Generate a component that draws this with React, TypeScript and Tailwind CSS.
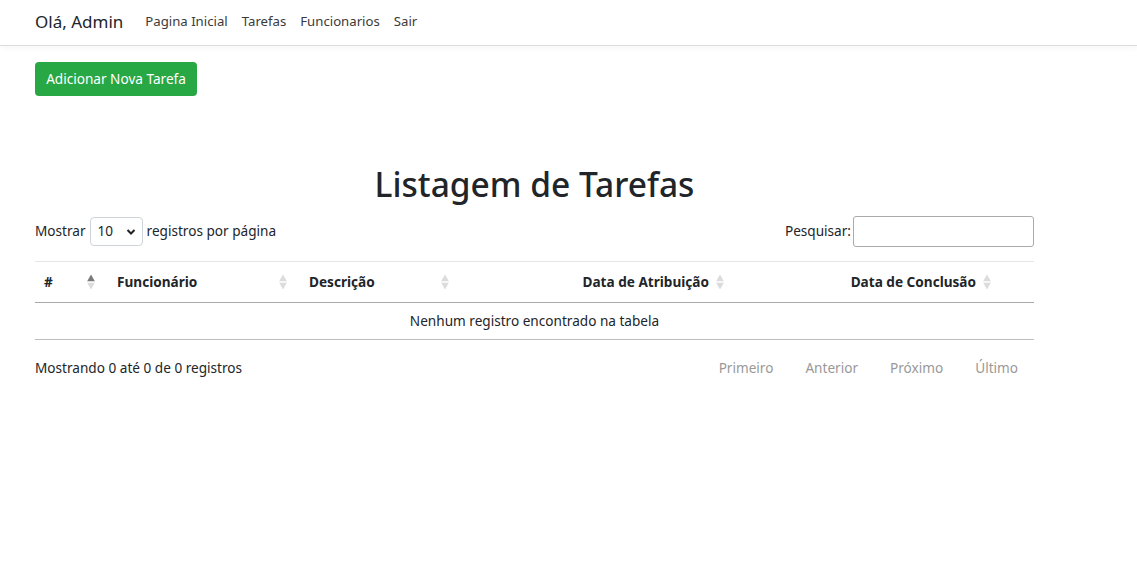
function SortIcon({ active }: { active?: boolean }) {
  return (
    <span className="absolute right-[13px] top-1/2 -translate-y-1/2 flex flex-col items-center gap-[1px]">
      <svg width="8" height="7" viewBox="0 0 8 7">
        <path d="M4 0 L8 7 L0 7 Z" fill={active ? "#7a7a7a" : "#dcdcdc"} />
      </svg>
      <svg width="8" height="7" viewBox="0 0 8 7">
        <path d="M0 0 L8 0 L4 7 Z" fill="#dcdcdc" />
      </svg>
    </span>
  );
}

export default function App() {
  return (
    <div className="min-h-[573px] bg-white text-[13.6px] text-[#212529] font-['Noto_Sans',sans-serif]">
      <nav className="h-[46px] border-b border-[#dcdcdc] shadow-[0_2px_6px_rgba(0,0,0,0.04)] flex items-center px-[35px]">
        <span className="text-[17px] mr-[22px] -mt-[2px]">Olá, Admin</span>
        <div className="flex gap-[14px] text-[13.2px] text-[#3a3a3a] -mt-[2px]">
          <a>Pagina Inicial</a>
          <a>Tarefas</a>
          <a>Funcionarios</a>
          <a>Sair</a>
        </div>
      </nav>

      <main className="px-[35px] pt-[16px]">
        <button className="h-[34px] w-[162px] rounded-[4px] bg-[#28a745] text-white text-[13.6px]">
          Adicionar Nova Tarefa
        </button>

        <div className="w-[999px]">
          <h1 className="mt-[62px] text-center text-[33.5px] font-medium leading-[52px] text-[#212529]">
            Listagem de Tarefas
          </h1>

          <div className="flex items-center justify-between mt-[6px]">
            <div className="flex items-center gap-[4px]">
              <span>Mostrar</span>
              <div className="relative w-[53px] h-[29px] border border-[#ced4da] rounded-[4px] flex items-center pl-[7px]">
                <span>10</span>
                <svg className="absolute right-[6px] top-[10px]" width="10" height="8" viewBox="0 0 10 8">
                  <path d="M1.5 2 L5 5.5 L8.5 2" stroke="#222" strokeWidth="2" fill="none" />
                </svg>
              </div>
              <span>registros por página</span>
            </div>
            <div className="flex items-center gap-[2px]">
              <span>Pesquisar:</span>
              <input className="w-[181px] h-[31px] border border-[#aaa] rounded-[3px] outline-none" />
            </div>
          </div>

          <table className="w-[999px] mt-[14px] border-collapse table-fixed">
            <colgroup>
              <col className="w-[73px]" />
              <col className="w-[192px]" />
              <col className="w-[162px]" />
              <col className="w-[275px]" />
              <col className="w-[267px]" />
              <col className="w-[30px]" />
            </colgroup>
            <thead>
              <tr className="border-t border-[#e5e5e5] border-b border-b-[#a9a9a9] h-[41px]">
                <th className="relative text-left font-bold pl-[9px]">
                  #
                  <SortIcon active />
                </th>
                <th className="relative text-left font-bold pl-[9px]">
                  Funcionário
                  <SortIcon />
                </th>
                <th className="relative text-left font-bold pl-[9px]">
                  Descrição
                  <SortIcon />
                </th>
                <th className="relative text-right font-bold pr-[28px]">
                  Data de Atribuição
                  <SortIcon />
                </th>
                <th className="relative text-right font-bold pr-[28px]">
                  Data de Conclusão
                  <SortIcon />
                </th>
                <th></th>
              </tr>
            </thead>
            <tbody>
              <tr className="border-b border-[#bcbcbc] h-[37px]">
                <td colSpan={6} className="text-center">
                  Nenhum registro encontrado na tabela
                </td>
              </tr>
            </tbody>
          </table>

          <div className="flex items-center justify-between mt-[18px]">
            <span>Mostrando 0 até 0 de 0 registros</span>
            <div className="flex text-[#999]">
              <span className="px-[16px]">Primeiro</span>
              <span className="px-[16px]">Anterior</span>
              <span className="px-[16px]">Próximo</span>
              <span className="px-[16px]">Último</span>
            </div>
          </div>
        </div>
      </main>
    </div>
  );
}
